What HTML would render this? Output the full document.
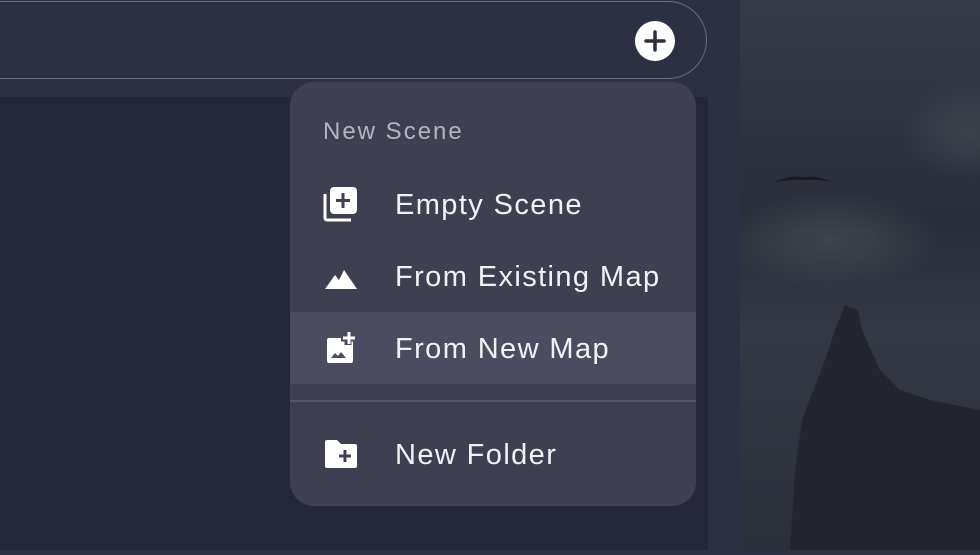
<!DOCTYPE html>
<html><head><style>
body{margin:0;width:980px;height:550px;overflow:hidden;background:#2d2f42;font-family:"Liberation Sans",sans-serif;position:relative}
.bar{position:absolute;left:-40px;top:1px;width:747px;height:78px;border:1.5px solid #6a6b7e;border-radius:40px;background:#2d2f42;box-sizing:border-box}
.low{position:absolute;left:0;top:97px;width:708px;height:453px;background:#242639}
.plus{position:absolute;left:635px;top:21px;width:40px;height:40px;border-radius:50%;background:#fff}
.photo{position:absolute;left:740px;top:0;width:240px;height:550px;background:radial-gradient(ellipse 110px 50px at 90px 240px,#3f444e,transparent),radial-gradient(ellipse 70px 50px at 230px 130px,#3d424d,transparent),linear-gradient(#363a47,#2a2e3a 40%,#333844 60%,#2c303b)}
.menu{position:absolute;left:290px;top:82px;width:406px;height:424px;background:#3f3f52;border-radius:24px;overflow:hidden;box-shadow:8px 8px 0 #26283a}
.hd{position:absolute;left:33px;top:36px;font-size:24px;color:#b4b4c0;letter-spacing:2px}
.it{position:absolute;left:0;width:406px;height:72px;color:#f2f2f5;font-size:29px;letter-spacing:1.4px}
.it span{position:absolute;left:105px;top:21px}
.it svg{position:absolute;left:33px;top:18px}
</style></head><body>
<div class="low"></div>
<div class="bar"></div>
<div class="plus"><svg width="40" height="40"><path d="M20 11v18M11 20h18" stroke="#2d2f42" stroke-width="3.5" stroke-linecap="round"/></svg></div>
<div class="photo"><svg width="240" height="550"><path d="M50 550L55 470 62 420 85 360 95 330 105 305 118 310 122 330 140 370 160 390 190 400 240 410 240 550Z" fill="#23262e"/><path d="M33 183q15-8 30-6 15-2 32 6q-15-4-32-3-15-1-30 3z" fill="#1a1c22"/></svg></div>
<div class="menu">
<div class="hd">New Scene</div>
<div class="it" style="top:86px"><svg width="36" height="36" viewBox="0 0 36 36"><rect x="7" y="1" width="27" height="27" rx="4" fill="#fff"/><path d="M20 7v15M13 14.5h14" stroke="#3f3f52" stroke-width="3"/><path d="M2 8v24a2 2 0 0 0 2 2h24" stroke="#fff" stroke-width="3" fill="none"/></svg><span>Empty Scene</span></div>
<div class="it" style="top:158px"><svg width="36" height="36" viewBox="0 0 36 36"><path d="M2 31l10-14 4 5 5-10 13 19z" fill="#fff"/></svg><span>From Existing Map</span></div>
<div class="it" style="top:230px;background:#4c4c60"><svg width="36" height="36" viewBox="0 0 36 36"><rect x="4" y="8" width="26" height="25" rx="2" fill="#fff"/><path d="M25 1v14M18 8h14" stroke="#4c4c60" stroke-width="7"/><path d="M26 2v12M20 8h12" stroke="#fff" stroke-width="3"/><path d="M8 28l4-5 3 3 3-4 5 6z" fill="#4c4c60"/></svg><span>From New Map</span></div>
<div style="position:absolute;left:0;top:318px;width:406px;height:2px;background:#56566a"></div>
<div class="it" style="top:336px"><svg width="36" height="36" viewBox="0 0 36 36"><path d="M2 6a2 2 0 0 1 2-2h10l4 4h14a2 2 0 0 1 2 2v20a2 2 0 0 1-2 2H4a2 2 0 0 1-2-2z" fill="#fff"/><path d="M22 14v12M16 20h12" stroke="#3f3f52" stroke-width="3"/></svg><span>New Folder</span></div>
</div>
</body></html>
